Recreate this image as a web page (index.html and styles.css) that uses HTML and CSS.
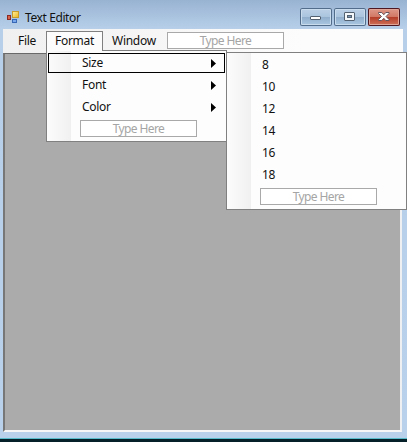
FILE: index.html
```html
<!DOCTYPE html>
<html lang="en">
<head>
<meta charset="utf-8">
<title>Text Editor</title>
<link rel="stylesheet" href="styles.css">
</head>
<body>
<div class="window">
  <header class="titlebar">
    <svg class="app-icon" width="13" height="13" viewBox="0 0 13 13">
      <defs><linearGradient id="y" x2="1" y2="1"><stop stop-color="#fff0a0"/><stop offset="1" stop-color="#eeb51c"/></linearGradient></defs>
      <rect x=".5" y="4.5" width="3" height="4" fill="#d8644c" stroke="#8c2924"/>
      <rect x="5.5" y=".5" width="6" height="6" fill="url(#y)" stroke="#c79a2c"/>
      <rect x="5.5" y="8.5" width="4" height="3" fill="#79a8ed" stroke="#3868b5"/>
    </svg>
    <h1 class="title">Text Editor</h1>
    <div class="controls">
      <button class="control" aria-label="Minimize"><svg width="32" height="18" viewBox="0 0 32 18"><rect x="10.5" y="8.5" width="10" height="3" rx=".5" fill="#fff" stroke="#53606f"/></svg></button>
      <button class="control" aria-label="Maximize"><svg width="32" height="18" viewBox="0 0 32 18"><rect x="10.5" y="4.5" width="10" height="8" rx=".5" fill="#f4f7fa" stroke="#53606f"/><rect x="13.5" y="7.5" width="4" height="2" fill="#7895b3" stroke="#53606f"/></svg></button>
      <button class="control close" aria-label="Close"><svg width="32" height="18" viewBox="0 0 32 18"><path d="M10.5 4.5h3.3l2 2.2 2-2.2h3.2v1L18 8.5l3 3v1h-3.3l-1.9-2.2-2 2.2h-3.3v-1l3-3-3-3z" fill="#fff" stroke="#66535b"/></svg></button>
    </div>
  </header>
  <nav class="menubar">
    <span class="menu file">File</span>
    <span class="menu active">Format</span>
    <span class="menu win">Window</span>
    <span class="type-here">Type Here</span>
  </nav>
  <main class="client"></main>
</div>
<div class="dropdown format-menu">
  <div class="item selected"><span>Size</span><i class="arrow"></i></div>
  <div class="item"><span>Font</span><i class="arrow"></i></div>
  <div class="item"><span>Color</span><i class="arrow"></i></div>
  <span class="type-here">Type Here</span>
</div>
<div class="dropdown size-menu">
  <div class="item">8</div>
  <div class="item">10</div>
  <div class="item">12</div>
  <div class="item">14</div>
  <div class="item">16</div>
  <div class="item">18</div>
  <span class="type-here">Type Here</span>
</div>
</body>
</html>
```
FILE: styles.css
```css
* { box-sizing: border-box; }
body {
  margin: 0;
  width: 407px;
  height: 442px;
  overflow: hidden;
  position: relative;
  background: #06202a;
  color: #111;
  font: 12px/16px "Noto Sans", "Open Sans", sans-serif;
  letter-spacing: -.28px;
}
.window {
  height: 439px;
  padding: 0 5px 6px 3px;
  display: flex;
  flex-direction: column;
  background: linear-gradient(#98b3d2, #b7cfe9 29px, #b9d1ea);
  border-bottom: 1px solid #58bccb;
}
.titlebar {
  height: 29px;
  flex: none;
  display: flex;
  padding: 0 2px 0 4px;
}
.app-icon { margin-top: 11px; }
.title {
  margin: 10px 0 0 5px;
  font-size: 12px;
  line-height: 16px;
  font-weight: 400;
  letter-spacing: -.4px;
}
.controls {
  display: flex;
  gap: 2px;
  margin: 8px 0 0 auto;
}
.control {
  width: 32px;
  height: 18px;
  padding: 0;
  border: 0;
  border-radius: 2px;
  background: linear-gradient(#bdd1e7, #abc5df 48%, #91afcd 52%, #adc9e3);
  box-shadow: inset 0 0 0 1px #526d8c, inset 0 0 0 2px #c9dced;
}
.control svg { display: block; }
.close {
  background: linear-gradient(#df9b8b, #d27966 48%, #b53e29 52%, #d2765e);
  box-shadow: inset 0 0 0 1px #4d1822, inset 0 0 0 2px #e1a598;
}
.menubar {
  height: 24px;
  flex: none;
  display: flex;
  align-items: flex-start;
  margin-right: -1px;
  background: linear-gradient(90deg, #f0f0f0, #fcfcfc 75%);
}
.menu { margin-top: 4px; }
.file { width: 43px; padding-left: 15px; }
.active {
  width: 57px;
  height: 22px;
  margin-top: 2px;
  padding: 1px 0 0 8px;
  background: #fcfcfc;
  border: 1px solid #808080;
  border-bottom: 0;
}
.win { width: 64px; padding-left: 9px; }
.type-here {
  display: block;
  width: 117px;
  height: 17px;
  border: 1px solid #a9a9a9;
  background: #fff;
  color: #a5a5a5;
  line-height: 16px;
  letter-spacing: -.6px;
  text-align: center;
}
.menubar .type-here { margin-top: 3px; }
.client {
  flex: 1;
  background: #ababab;
  border: 2px solid #696969;
  border-top-width: 1px;
  border-left-color: #777;
  border-right-color: #eef0f1;
  border-bottom-color: #f6f6f6;
}
.dropdown {
  position: absolute;
  width: 181px;
  border: 1px solid #808080;
  background: linear-gradient(90deg, #fcfcfc, #f0f0f0 24px, #fdfdfd 24px);
}
.format-menu {
  left: 46px;
  top: 50px;
  height: 92px;
  padding: 1px;
}
.format-menu::before {
  content: "";
  position: absolute;
  left: 0;
  top: -1px;
  width: 55px;
  height: 1px;
  background: #fcfcfc;
}
.size-menu {
  left: 226px;
  top: 52px;
  height: 158px;
  padding: 1px;
}
.item {
  height: 22px;
  padding: 3px 10px 0 34px;
  display: flex;
  justify-content: space-between;
}
.selected {
  height: 20px;
  margin: 1px 0 1px;
  padding: 1px 9px 0 33px;
  border: 1px solid #000;
}
.arrow {
  width: 5px;
  height: 9px;
  margin: 4px -1px 0 0;
  background: #000;
  clip-path: polygon(0 0, 100% 50%, 0 100%);
}
.dropdown .type-here { margin: 2px 0 0 32px; }
```
